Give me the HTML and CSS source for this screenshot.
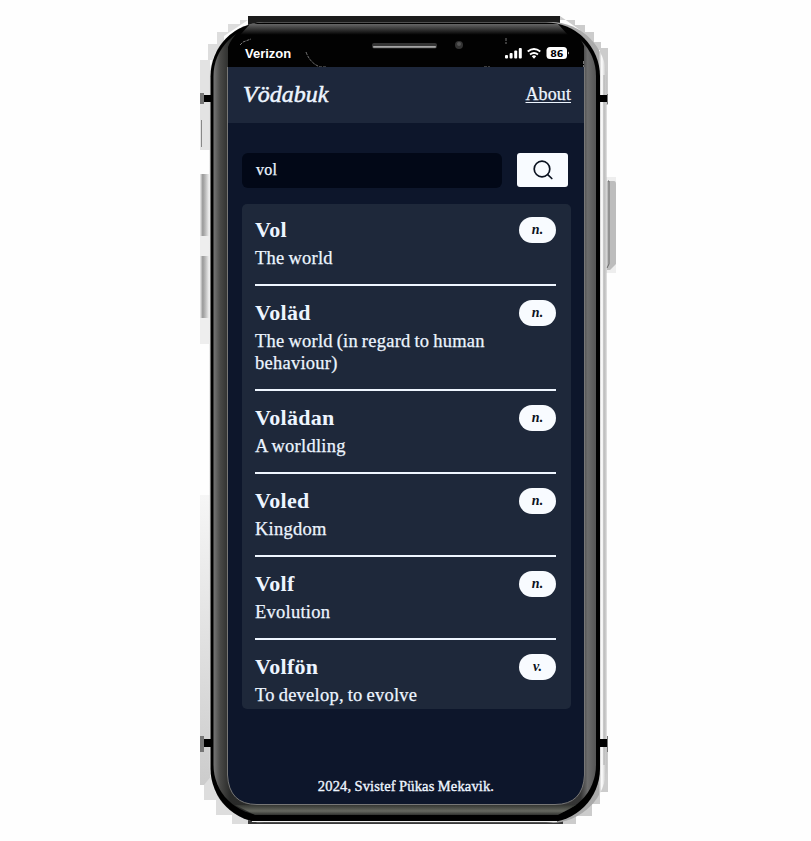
FILE: index.html
```html
<!DOCTYPE html>
<html lang="en">
<head>
<meta charset="utf-8">
<title>Vödabuk</title>
<link rel="stylesheet" href="styles.css">
</head>
<body>
<svg class="device" width="811" height="841" viewBox="0 0 811 841" aria-hidden="true">
  <defs>
    <linearGradient id="silver" x1="0" x2="1"><stop offset="0" stop-color="#ddd"/><stop offset=".015" stop-color="#fafafa"/><stop offset=".02" stop-color="#999"/><stop offset=".98" stop-color="#aaa"/><stop offset=".988" stop-color="#fff"/><stop offset="1" stop-color="#bbb"/></linearGradient>
    <linearGradient id="side" x1="0" x2="1"><stop offset="0" stop-color="#777"/><stop offset=".018" stop-color="#484846"/><stop offset=".044" stop-color="#292a29"/><stop offset=".96" stop-color="#353535"/><stop offset=".978" stop-color="#6c6c6c"/><stop offset="1" stop-color="#555"/></linearGradient>
    <linearGradient id="top" x1="0" x2="0" y1="0" y2="1"><stop offset="0" stop-color="#666"/><stop offset="1" stop-color="#000"/></linearGradient>
    <linearGradient id="bottom" x1="0" x2="0" y1="0" y2="1"><stop offset="0" stop-color="#353733"/><stop offset=".6" stop-color="#666860"/><stop offset="1" stop-color="#30312e"/></linearGradient>
    <linearGradient id="key" x1="0" x2="1"><stop offset="0" stop-color="#eee"/><stop offset=".3" stop-color="#999"/><stop offset=".6" stop-color="#bbb"/><stop offset="1" stop-color="#eee"/></linearGradient>
    <linearGradient id="fade" x1="0" x2="0" y1="0" y2="1"><stop offset="0" stop-color="#f6f6f6"/><stop offset="1" stop-color="#ccc"/></linearGradient>
  </defs>
  <path d="M254 16V20H240V24H228V32H217V44H208V60H202V150H208V60H224V36Z" fill="#ddd"/>
  <path d="M560 16V20H575V25H585V32H594V42H601V48H608V105H600V50H580V30Z" fill="#ccc"/>
  <rect x="200" y="60" width="10" height="90" fill="#e3e3e3"/>
  <rect x="200" y="495" width="10" height="290" fill="url(#fade)"/>
  <path d="M204 785V800H216V815H232V824H250V810L212 775Z" fill="#ddd"/>
  <path d="M608 740V792H600V804H592V816H576V824H555V810L600 775Z" fill="#ccc"/>
  <rect x="201" y="120" width="1" height="27" fill="#888"/>
  <rect x="200" y="174" width="9" height="62" fill="url(#key)"/>
  <rect x="200" y="256" width="9" height="62" fill="url(#key)"/>
  <path d="M200 236h9v20h-9zM200 318h9v26h-9z" fill="#eee"/>
  <rect x="604" y="177" width="12" height="96" fill="#eee"/>
  <path d="M604 181h10q2 0 2 3v80l-6 6h-3V181z" fill="#bdbdbd"/>
  <path d="M608 181h1v83l-2 4" fill="none" stroke="#666"/>
  <rect x="248" y="16" width="312" height="14" fill="#1c1c1c"/>
  <rect x="248" y="815" width="315" height="9" fill="#383838"/>
  <rect x="209.500" y="22" width="397" height="801" rx="56" fill="url(#silver)"/>
  <rect x="603.500" y="75" width="1" height="690" fill="#aaa"/>
  <rect x="210.500" y="22.500" width="389.500" height="800" rx="54" fill="#000"/>
  <rect x="252" y="821" width="305" height="1" fill="#eee"/>
  <rect x="213.500" y="26" width="382.500" height="789" rx="50" fill="url(#side)"/>
  <path d="M235 805H576L558 815H255Z" fill="url(#bottom)"/>
  <path d="M238 32Q248 24 264 24H548Q567 24 579 36L584 46V68H228V47Q231 39 238 32Z" fill="#020202"/>
  <path d="M250 24H558L568 35H240Z" fill="url(#top)"/>
  <path d="M227.500 67V775Q229 804.500 257 804.500H555Q583 804.500 584.500 775V67" fill="#0d162b" stroke="#777" stroke-width="1"/>
  <path d="M204 95h7v7h-7zM600 95h7v7h-7zM204 739h7v8h-7zM600 739h7v8h-7z" fill="#000"/>
  <path d="M200 93h4v11h-4zM607 94h1v10h-1zM200 736h4v16h-4zM607 736h1v16h-1z" fill="#777"/>
  <rect x="372" y="43" width="65" height="5.500" rx="2" fill="#343434"/>
  <rect x="373" y="46" width="63" height="1.700" rx=".8" fill="#a5a5a5"/>
  <circle cx="459" cy="45" r="4" fill="#333"/><circle cx="459" cy="44" r="2" fill="#555"/>
  <path d="M240 45l3-3 8-3M306 52q4 11 14 15h7M484 67h6M506 38v6M583.500 61v7" fill="none" stroke="#aaa" stroke-width=".7" stroke-dasharray="3 1"/>
</svg>
<div class="phone">
  <div class="status">
    <span class="carrier">Verizon</span>
    <svg width="64" height="14" viewBox="0 0 64 14" aria-hidden="true">
      <g fill="#fff"><rect x="0" y="9" width="3" height="3.500" rx="1"/><rect x="4.600" y="7" width="3" height="5.500" rx="1"/><rect x="9.200" y="4.500" width="3" height="8" rx="1"/><rect x="13.800" y="2" width="3" height="10.500" rx="1"/><rect x="41.500" y="1" width="20.500" height="12" rx="3.500"/><path d="M63 5.500q1.500 1.500 0 3z"/><path d="M26.800 10.200q2.200-1.800 4.400 0L29 12.800z"/></g>
      <path d="M22.700 5.500q6.300-5.200 12.600 0M25 8.500q4-3.200 8 0" fill="none" stroke="#fff" stroke-width="1.900"/>
      <text class="battery" x="51.800" y="10.600" text-anchor="middle">86</text>
    </svg>
  </div>
  <header class="bar"><h1 class="brand">Vödabuk</h1><a class="about" href="#">About</a></header>
  <main class="content">
    <form class="search">
      <div class="field">vol</div>
      <div class="button"><svg width="22" height="22" viewBox="0 0 22 22" fill="none" stroke="#0b1220" stroke-width="1.700" stroke-linecap="round"><circle cx="10" cy="10" r="7.800"/><path d="M15.700 15.700L19.800 19.500"/></svg></div>
    </form>
    <section class="results">
      <article class="entry"><div class="row"><h2>Vol</h2><span class="tag">n.</span></div><p>The world</p></article>
      <article class="entry"><div class="row"><h2>Voläd</h2><span class="tag">n.</span></div><p>The world (in regard to human<br>behaviour)</p></article>
      <article class="entry"><div class="row"><h2>Volädan</h2><span class="tag">n.</span></div><p>A worldling</p></article>
      <article class="entry"><div class="row"><h2>Voled</h2><span class="tag">n.</span></div><p>Kingdom</p></article>
      <article class="entry"><div class="row"><h2>Volf</h2><span class="tag">n.</span></div><p>Evolution</p></article>
      <article class="entry"><div class="row"><h2>Volfön</h2><span class="tag">v.</span></div><p>To develop, to evolve</p></article>
    </section>
  </main>
  <footer class="foot">2024, Svistef Pükas Mekavik.</footer>
</div>
</body>
</html>
```
FILE: styles.css
```css
* { box-sizing: border-box; }
body { margin: 0; background: #fefefe; width: 811px; height: 841px; overflow: hidden; font-family: "Liberation Serif", serif; color: #edf5ff; }
h1, h2, p { margin: 0; }
.device { position: absolute; left: 0; top: 0; }
.phone { position: relative; width: 356px; margin-left: 228px; padding-top: 39px; }
.status { height: 28px; display: flex; align-items: center; justify-content: space-between; padding: 0 15px 0 17px; }
.carrier { font: bold 13px/29px "Liberation Sans", sans-serif; color: #fff; }
.battery { font: bold 9.5px "DejaVu Sans", sans-serif; fill: #000; }
.bar { height: 56px; background: #1d273b; display: flex; justify-content: space-between; padding: 0 13px 0 15px; }
.brand { font-size: 24px; line-height: 55px; font-style: italic; font-weight: normal; letter-spacing: 0; -webkit-text-stroke: .5px #edf5ff; }
.about { color: inherit; font-size: 18px; line-height: 55px; letter-spacing: .1px; -webkit-text-stroke: .25px #edf5ff; text-decoration: underline; text-underline-offset: 2px; text-decoration-thickness: 1px; }
.content { padding: 30px 13px 0 14px; }
.search { display: flex; gap: 15px; height: 34px; }
.field { width: 260px; height: 35px; background: #020817; border-radius: 6px; padding-left: 14px; font-size: 16px; line-height: 33px; letter-spacing: .2px; -webkit-text-stroke: .25px #edf5ff; }
.button { width: 51px; height: 34px; border-radius: 3px; background: #f8fbff; display: flex; align-items: center; justify-content: center; }
.results { margin-top: 17px; height: 505px; overflow: hidden; background: #1e283a; border-radius: 5px; padding: 0 15px 0 13px; }
.entry { padding: 13px 0 15px; border-bottom: 2px solid #eff6ff; }
.entry:first-child { padding-top: 12px; }
.row { display: flex; justify-content: space-between; height: 31px; }
h2 { font-size: 22px; line-height: 28px; letter-spacing: .3px; }
p { font-size: 18.5px; line-height: 22px; letter-spacing: .25px; word-spacing: -1px; white-space: nowrap; -webkit-text-stroke: .25px #edf5ff; }
.tag { width: 37px; height: 26px; margin-top: 1px; border-radius: 13px; background: #f8fbff; color: #0b1220; font-size: 14px; line-height: 26px; font-style: italic; font-weight: bold; text-align: center; }
.foot { margin-top: 66px; text-align: center; font-size: 14.5px; line-height: 22px; letter-spacing: .15px; word-spacing: -.5px; -webkit-text-stroke: .35px #edf5ff; }
```
